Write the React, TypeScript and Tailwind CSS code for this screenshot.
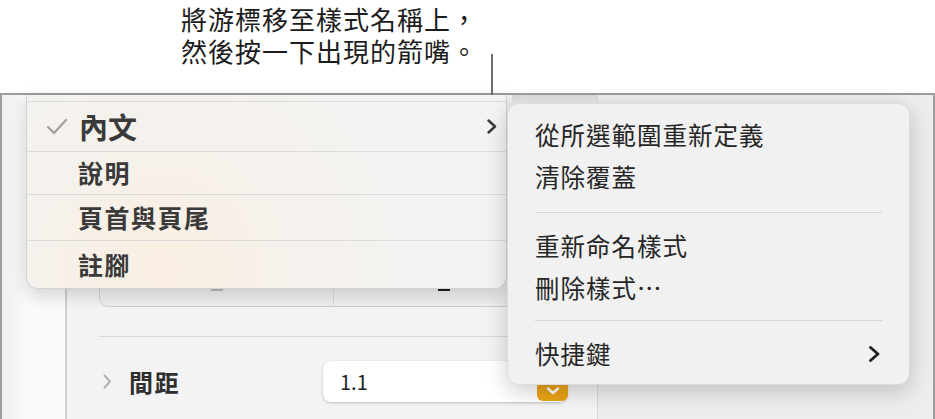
import React from 'react';

const font = "font-['Noto_Sans_CJK_TC','Noto_Sans',sans-serif]";

function Check() {
  return (
    <svg width="22" height="16" viewBox="0 0 22 16" className="shrink-0">
      <polyline points="2,8 8,14 20,1" fill="none" stroke="#a0a0a0" strokeWidth="2.2" strokeLinecap="round" strokeLinejoin="round" />
    </svg>
  );
}

function Chevron({ color = '#3a3a3a', w = 10, h = 15, sw = 2.4 }: { color?: string; w?: number; h?: number; sw?: number }) {
  return (
    <svg width={w} height={h} viewBox={`0 0 ${w} ${h}`}>
      <polyline points={`1.5,1.5 ${w - 2},${h / 2} 1.5,${h - 1.5}`} fill="none" stroke={color} strokeWidth={sw} strokeLinecap="round" strokeLinejoin="round" />
    </svg>
  );
}

const styles = [
  { id: 2, label: '說明', h: 'h-[43px]' },
  { id: 3, label: '頁首與頁尾', h: 'h-[46px]' },
  { id: 4, label: '註腳', h: 'h-[47px]' },
];

const actions = [
  [
    { id: 1, label: '從所選範圍重新定義' },
    { id: 2, label: '清除覆蓋' },
  ],
  [
    { id: 3, label: '重新命名樣式' },
    { id: 4, label: '刪除樣式⋯' },
  ],
];

function StyleMenu() {
  return (
    <div className="absolute left-[26px] top-[95px] w-[481px] rounded-b-[12px] border border-t-0 border-[#d2d2d2] bg-[radial-gradient(circle_at_28%_90%,#faefe2_0%,#f5f1ec_35%,#f3f3f2_70%)] shadow-[0_6px_18px_rgba(0,0,0,0.16)]">
      <div className="h-[7px] border-b border-[#dadada]" />
      <div className="flex h-[50px] items-center border-b border-[#dadada] pl-[19px] pr-[9px]">
        <Check />
        <span className="ml-[11px] text-[29px] font-semibold text-[#3a3a3a]">內文</span>
        <span className="ml-auto flex">
          <Chevron />
        </span>
      </div>
      {styles.map((s, i) => (
        <div
          key={s.id}
          className={`flex items-center pl-[51px] ${s.h} ${i < styles.length - 1 ? 'border-b border-[#dadada]' : ''}`}
        >
          <span className="text-[25px] font-semibold tracking-[1.5px] text-[#3a3a3a]">{s.label}</span>
        </div>
      ))}
    </div>
  );
}

function ActionMenu() {
  return (
    <div className="absolute left-[507px] top-[103px] w-[403px] rounded-[12px] border border-[#dcdcdc] bg-[#f1f1f1] px-[27px] pb-[9px] pt-[10px] shadow-[0_6px_22px_rgba(0,0,0,0.2)]">
      {actions.map((group, gi) => (
        <div key={gi}>
          {group.map((a) => (
            <div key={a.id} className="flex h-[42px] items-center text-[24.5px] tracking-[1px] text-[#262626]">
              {a.label}
            </div>
          ))}
          <div className={`mb-[12px] h-px bg-[#d4d4d4] ${gi === 0 ? 'mt-[14px]' : 'mt-[11px]'}`} />
        </div>
      ))}
      <div className="flex h-[42px] items-center justify-between text-[24.5px] tracking-[1px] text-[#262626]">
        <span>快捷鍵</span>
        <span className="mr-[2px] flex">
          <Chevron color="#1e1e1e" w={11} h={16} sw={2.8} />
        </span>
      </div>
    </div>
  );
}

export default function App() {
  return (
    <div className={`relative h-[419px] w-[935px] overflow-hidden bg-white ${font}`}>
      <div className="h-[93px] pl-[181px] pt-[3px] text-[26px] leading-[32px] tracking-[1px] text-[#1c1c1c]">
        <p>
          將游標移至樣式名稱上，
          <br />
          然後按一下出現的箭嘴。
        </p>
      </div>

      <div className="flex h-[326px] border-x-2 border-t-2 border-[#9c9c9c]">
        <div className="w-[63px] bg-[linear-gradient(90deg,#efefef,#fafafa_40%)]" />
        <div className="flex w-[533px] flex-col border-l-2 border-r border-l-[#d0d0d0] border-r-[#d6d6d6] bg-[#f3f3f3]">
          <div className="flex h-[8px]">
            <div className="w-[445px]" />
            <div className="flex-1 bg-[linear-gradient(180deg,#d8d8d8,#ececec)]" />
          </div>
          <div className="px-[32px] pt-[157px]">
            <div className="flex h-[47px] items-end rounded-b-[9px] border border-[#d0d0d0] bg-[#efefef]">
              <div className="flex h-[22px] w-[234px] items-start justify-center border-r border-[#d8d8d8]">
                <span className="mt-[5px] h-[2px] w-[12px] bg-[#b8b8b8]" />
              </div>
              <div className="flex h-[22px] flex-1 items-start justify-center">
                <span className="mr-[10px] mt-[4px] h-[3px] w-[12px] bg-[#1e1e1e]" />
              </div>
            </div>
            <div className="mt-[29px] h-px bg-[#d6d6d6]" />
            <div className="mt-[24px] flex h-[41px] items-center">
              <span className="ml-[4px] flex">
                <Chevron color="#b0b0b0" w={9} h={15} sw={2} />
              </span>
              <span className="ml-[17px] text-[24px] font-semibold tracking-[1.5px] text-[#2e2e2e]">間距</span>
              <div className="relative ml-auto mr-[-2px] flex h-[41px] w-[244px] items-center rounded-[8px] bg-white pl-[17px] text-[20px] text-[#222] shadow-[0_1px_3px_rgba(0,0,0,0.22)]">
                1.1
                <span className="absolute bottom-[1px] right-[-1px] flex h-[20px] w-[31px] items-center justify-center rounded-[6px] bg-[#e9a215]">
                  <svg width="14" height="8" viewBox="0 0 14 8">
                    <polyline points="2,1.5 7,6 12,1.5" fill="none" stroke="white" strokeWidth="2.4" strokeLinecap="round" strokeLinejoin="round" />
                  </svg>
                </span>
              </div>
            </div>
          </div>
        </div>
        <div className="flex-1 bg-[#ededed]" />
      </div>

      <div className="absolute left-[491px] top-[54px] h-[64px] w-[2px] bg-[#6f6f6f]" />
      <StyleMenu />
      <ActionMenu />
    </div>
  );
}
